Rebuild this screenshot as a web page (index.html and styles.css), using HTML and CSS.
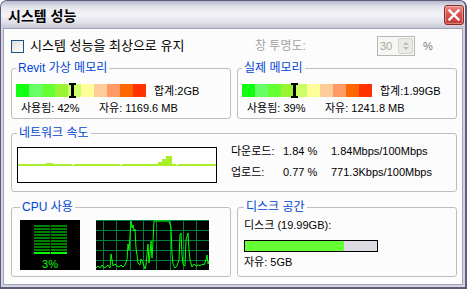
FILE: index.html
```html
<!DOCTYPE html>
<html lang="ko">
<head>
    <meta charset="UTF-8">
    <title>시스템 성능</title>
    <link rel="stylesheet" href="styles.css">
</head>
<body>
    <div class="window">
        <div class="titlebar">
            <span class="title">시스템 성능</span>
            <div class="close">
                <svg width="12" height="12" viewBox="0 0 12 12">
                    <path d="M1.5 1.5 L10.5 10.5 M10.5 1.5 L1.5 10.5" stroke="#fff" stroke-width="2.4" stroke-linecap="square"/>
                </svg>
            </div>
        </div>

        <div class="body">
            <div class="top-row">
                <label class="check"><span class="box"></span>시스템 성능을 최상으로 유지</label>
                <span class="opacity-label">창 투명도:</span>
                <div class="spin">
                    <span class="spin-value">30</span>
                    <span class="spin-btns">
                        <span class="arrow up"></span>
                        <span class="arrow down"></span>
                    </span>
                </div>
                <span class="pct">%</span>
            </div>

            <div class="pair">
                <fieldset class="group mem">
                    <legend>Revit 가상 메모리</legend>
                    <div class="mem-row">
                        <div class="meter">
                            <span class="seg s1"></span><span class="seg s2"></span><span class="seg s3"></span><span class="seg s4"></span><span class="seg s5"></span>
                            <span class="seg s6"></span><span class="seg s7"></span><span class="seg s8"></span><span class="seg s9"></span><span class="seg s10"></span>
                            <span class="marker" style="left: 43%"></span>
                        </div>
                        <span class="total">합계:2GB</span>
                    </div>
                    <div class="mem-stats">
                        <span class="used">사용됨: 42%</span>
                        <span>자유: 1169.6 MB</span>
                    </div>
                </fieldset>

                <fieldset class="group mem">
                    <legend>실제 메모리</legend>
                    <div class="mem-row">
                        <div class="meter">
                            <span class="seg s1"></span><span class="seg s2"></span><span class="seg s3"></span><span class="seg s4"></span><span class="seg s5"></span>
                            <span class="seg s6"></span><span class="seg s7"></span><span class="seg s8"></span><span class="seg s9"></span><span class="seg s10"></span>
                            <span class="marker" style="left: 40%"></span>
                        </div>
                        <span class="total">합계:1.99GB</span>
                    </div>
                    <div class="mem-stats">
                        <span class="used">사용됨: 39%</span>
                        <span>자유: 1241.8 MB</span>
                    </div>
                </fieldset>
            </div>

            <fieldset class="group net">
                <legend>네트워크 속도</legend>
                <div class="net-graph">
                    <svg width="198" height="34" viewBox="0 0 198 34">
                        <g fill="#aaee2a">
                            <rect x="0" y="16" width="198" height="2"/>
                            <rect x="28" y="15" width="7" height="1"/>
                            <rect x="140" y="14" width="4" height="2"/>
                            <rect x="144" y="11" width="4" height="5"/>
                            <rect x="148" y="8" width="6" height="8"/>
                        </g>
                        <g fill="#fff">
                            <rect x="54" y="16" width="2" height="1"/>
                            <rect x="102" y="16" width="2" height="1"/>
                            <rect x="158" y="16" width="2" height="1"/>
                        </g>
                    </svg>
                </div>
                <div class="net-info">
                    <span>다운로드:</span><span>1.84 %</span><span>1.84Mbps/100Mbps</span>
                    <span>업로드:</span><span>0.77 %</span><span>771.3Kbps/100Mbps</span>
                </div>
            </fieldset>

            <div class="pair">
                <fieldset class="group cpu">
                    <legend>CPU 사용</legend>
                    <div class="cpu-meter">
                        <div class="cpu-bars">
                            <span class="cpu-col"></span>
                            <span class="cpu-col"></span>
                        </div>
                        <div class="cpu-pct">3%</div>
                    </div>
                    <div class="cpu-graph">
                        <svg width="113" height="50" viewBox="0 0 113 50">
                            <path d="M0 0.5H113 M0 10.5H113 M0 20.5H113 M0 30.5H113 M0 40.5H113 M7.5 0V50 M20.5 0V50 M34.5 0V50 M47.5 0V50 M60.5 0V50 M74.5 0V50 M87.5 0V50 M100.5 0V50" stroke="#008040" stroke-width="1"/>
                            <polyline fill="none" stroke="#00ff00" stroke-width="1"
                                points="0,48 2,46 4,48 6,45 8,48 10,47 12,45 14,48 15,34 16,40 17,46 19,44 21,46 23,47 25,45 27,47 29,45 31,40 32,24 33,30 35,1 36,8 37,5 38,11 39,9 40,28 41,35 42,43 44,45 45,39 47,43 49,49 50,45 52,24 53,43 54,33 55,21 56,38 57,22 58,1 73,1 75,7 76,34 77,44 79,48 81,46 83,40 84,15 85,13 86,35 87,44 89,46 90,20 92,13 93,30 94,40 96,47 98,44 100,46 102,45 104,46 106,44 108,45 110,40 111,35 112,44 113,41"/>
                        </svg>
                    </div>
                </fieldset>

                <fieldset class="group disk">
                    <legend>디스크 공간</legend>
                    <div class="disk-size">디스크 (19.99GB):</div>
                    <div class="disk-bar"><span class="disk-fill" style="width: 75%"></span></div>
                    <div class="disk-free">자유: 5GB</div>
                </fieldset>
            </div>
        </div>
    </div>
</body>
</html>
```

FILE: styles.css
```css
* {
    margin: 0;
    padding: 0;
    box-sizing: border-box;
}

body {
    background: #fff;
    font-family: 'Liberation Sans', 'Noto Sans CJK KR', sans-serif;
    font-size: 11px;
    line-height: 14px;
    color: #000;
}

.window {
    width: 467px;
    height: 289px;
    border: 1px solid #5c5c7c;
    border-width: 1px 2px 2px 1px;
    border-radius: 7px 7px 0 0;
    background: #d4d4e0;
    display: flex;
    flex-direction: column;
    overflow: hidden;
}

.titlebar {
    height: 27px;
    flex: none;
    display: flex;
    align-items: center;
    justify-content: space-between;
    padding: 0 1px 0 7px;
    background: linear-gradient(to bottom, #b8b8cc 0%, #e4e4ec 22%, #f3f3f7 50%, #e2e2ea 78%, #c6c6d6 100%);
}

.title {
    font-family: 'Noto Sans CJK KR', sans-serif;
    font-size: 14px;
    font-weight: 700;
    color: #000;
}

.close {
    width: 20px;
    height: 20px;
    border: 1px solid #8c2a2a;
    border-radius: 3px;
    background: linear-gradient(to bottom, #ee8a84 0%, #d85450 45%, #c53a36 100%);
    display: flex;
    align-items: center;
    justify-content: center;
    box-shadow: inset 0 0 0 1px rgba(255, 255, 255, 0.35);
}

.body {
    flex: 1;
    margin: 0 2px 2px 2px;
    border: 1px solid #a2a2b6;
    background: #fcfcfc;
    padding: 7px 5px 6px 7px;
    display: flex;
    flex-direction: column;
}

/* top row */

.top-row {
    height: 20px;
    display: flex;
    align-items: center;
}

.check {
    width: 244px;
    display: flex;
    align-items: center;
    gap: 6px;
    font-size: 13px;
    line-height: 14px;
}

.box {
    width: 13px;
    height: 13px;
    border: 1px solid #1c5180;
    background: linear-gradient(135deg, #dcdcd7 0%, #f4f4f2 60%, #fff 100%);
}

.opacity-label {
    width: 122px;
    font-size: 12px;
    color: #a3a3a3;
}

.spin {
    width: 38px;
    height: 20px;
    border: 1px solid #b7b7b7;
    background: #f6f6f2;
    display: flex;
    align-items: center;
    justify-content: space-between;
    padding: 0 1px 0 2px;
}

.spin-value {
    color: #a8a8a8;
    font-size: 11px;
}

.spin-btns {
    width: 15px;
    height: 16px;
    border: 1px solid #d6d6d0;
    border-radius: 2px;
    background: #ebebe6;
    display: flex;
    flex-direction: column;
    align-items: center;
    justify-content: space-around;
    padding: 2px 0;
}

.arrow {
    width: 0;
    height: 0;
    border-left: 3px solid transparent;
    border-right: 3px solid transparent;
}

.arrow.up {
    border-bottom: 3px solid #bdbdb8;
}

.arrow.down {
    border-top: 3px solid #bdbdb8;
}

.pct {
    margin-left: 8px;
    color: #777;
    font-size: 11px;
}

/* group boxes */

.pair {
    display: grid;
    grid-template-columns: 1fr 1fr;
    gap: 6px;
}

.group {
    border: 1px solid #bebebe;
    border-radius: 3px;
    min-width: 0;
    padding: 0 4px;
}

.group legend {
    color: #0046d5;
    font-size: 12px;
    line-height: 14px;
    padding: 0 2px;
}

.mem {
    margin-top: 5px;
    padding-top: 8px;
    padding-bottom: 3px;
}

.mem-row {
    height: 15px;
    display: flex;
    align-items: center;
}

.meter {
    width: 130px;
    height: 13px;
    display: flex;
    position: relative;
    margin-right: 8px;
}

.seg {
    flex: 1;
}

.s1 { background: #11ff11; }
.s2 { background: #66ff66; }
.s3 { background: #66ff33; }
.s4 { background: #99f533; }
.s5 { background: #ccff66; }
.s6 { background: #ffff99; }
.s7 { background: #ffcc99; }
.s8 { background: #ff9966; }
.s9 { background: #ff6600; }
.s10 { background: #ff3300; }

.marker {
    position: absolute;
    top: -1px;
    width: 7px;
    height: 15px;
    margin-left: -3px;
    border-top: 2px solid #000;
    border-bottom: 2px solid #000;
}

.marker::after {
    content: '';
    position: absolute;
    left: 2px;
    top: 0;
    bottom: 0;
    width: 3px;
    background: #000;
}

.mem-stats {
    height: 14px;
    margin-top: 3px;
    padding-left: 5px;
    display: flex;
}

.used {
    width: 78px;
}

.net {
    margin-top: 7px;
    padding: 7px 5px 8px;
    display: flex;
    align-items: flex-start;
}

.net-graph {
    width: 200px;
    height: 36px;
    border: 1px solid #000;
    background: #fff;
}

.net-graph svg {
    display: block;
}

.net-info {
    margin: -6px 0 0 14px;
    display: grid;
    grid-template-columns: 52px 48px auto;
    grid-auto-rows: 21px;
    line-height: 21px;
}

.cpu,
.disk {
    margin-top: 8px;
    padding-bottom: 6px;
}

.cpu {
    padding-top: 6px;
    padding-left: 8px;
    display: flex;
}

.cpu-meter {
    width: 60px;
    height: 50px;
    background: #000;
    padding-top: 5px;
}

.cpu-bars {
    display: flex;
    justify-content: center;
    gap: 1px;
    padding-left: 1px;
}

.cpu-col {
    width: 16px;
    height: 29px;
    background:
        linear-gradient(#00ff00, #00ff00) bottom / 100% 2px no-repeat,
        repeating-linear-gradient(to bottom, #008000 0 2px, transparent 2px 3px) top / 100% 26px no-repeat;
}

.cpu-pct {
    margin-top: 4px;
    text-align: center;
    color: #00ff00;
    font-size: 11px;
    line-height: 12px;
}

.cpu-graph {
    width: 113px;
    height: 50px;
    margin-left: 16px;
    background: #000;
}

.cpu-graph svg {
    display: block;
}

.disk {
    padding-top: 4px;
    padding-left: 6px;
}

.disk-size {
    height: 14px;
}

.disk-bar {
    width: 134px;
    height: 12px;
    margin-top: 8px;
    border: 1px solid #000;
    background: #dcdce2;
}

.disk-fill {
    display: block;
    height: 100%;
    background: #66ff33;
}

.disk-free {
    height: 14px;
    margin-top: 3px;
}
```
